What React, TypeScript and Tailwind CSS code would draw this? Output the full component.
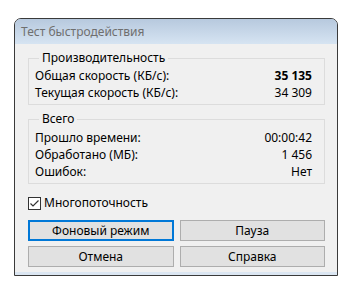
import React from "react";

const font = { fontFamily: '"Noto Sans", "Open Sans", sans-serif' };

function Row({ label, value, bold }: { label: string; value: string; bold?: boolean }) {
  return (
    <div className="flex items-center justify-between h-[17px]">
      <span>{label}</span>
      <span className={bold ? "font-bold" : ""}>{value}</span>
    </div>
  );
}

function Group({ title, children }: { title: string; children: React.ReactNode }) {
  return (
    <fieldset className="border border-[#dcdcdc] pl-[6px] pr-[12px]">
      <legend className="ml-[4px] px-[3px] leading-[16px]">{title}</legend>
      {children}
    </fieldset>
  );
}

function Btn({ children, focused }: { children: React.ReactNode; focused?: boolean }) {
  return (
    <button
      className={
        "h-[21px] bg-[#e1e1e1] flex items-center justify-center leading-none " +
        (focused ? "border-2 border-[#0078d7]" : "border border-[#adadad]")
      }
    >
      {children}
    </button>
  );
}

export default function App() {
  return (
    <div className="w-[363px] h-[299px] bg-white pt-[18px] pl-[14px]" style={font}>
      <div className="w-[324px] h-[258px] border border-[#3a3a3a] rounded-t-[7px] overflow-hidden flex flex-col bg-[#dbe6f2] text-[12px] text-black">
        <div className="h-[25px] bg-gradient-to-b from-[#b7c9de] to-[#d6e4f2] flex items-center pl-[6px] text-[#6f6f6f]">
          Тест быстродействия
        </div>
        <div className="flex-1 bg-[#f0f0f0] mb-[3px] pl-[13px] pr-[12px] pt-[6px] flex flex-col">
          <Group title="Производительность">
            <div className="pt-[1px] pb-[3px]">
              <Row label="Общая скорость (КБ/с):" value="35 135" bold />
              <Row label="Текущая скорость (КБ/с):" value="34 309" />
            </div>
          </Group>
          <div className="h-[6px]" />
          <Group title="Всего">
            <div className="pt-[2px] pb-[3px]">
              <Row label="Прошло времени:" value="00:00:42" />
              <Row label="Обработано (МБ):" value="1 456" />
              <Row label="Ошибок:" value="Нет" />
            </div>
          </Group>
          <div className="flex items-center mt-[12px] h-[14px]">
            <div className="w-[13px] h-[13px] border border-[#333333] bg-white flex items-center justify-center">
              <svg width="11" height="11" viewBox="0 0 11 11">
                <path d="M1.5 5.5 L4 8 L9.5 2.5" stroke="#333" strokeWidth="1.2" fill="none" />
              </svg>
            </div>
            <span className="ml-[3px]">Многопоточность</span>
          </div>
          <div className="grid grid-cols-2 gap-x-[6px] gap-y-[5px] mt-[10px]">
            <Btn focused>Фоновый режим</Btn>
            <Btn>Пауза</Btn>
            <Btn>Отмена</Btn>
            <Btn>Справка</Btn>
          </div>
        </div>
      </div>
    </div>
  );
}
